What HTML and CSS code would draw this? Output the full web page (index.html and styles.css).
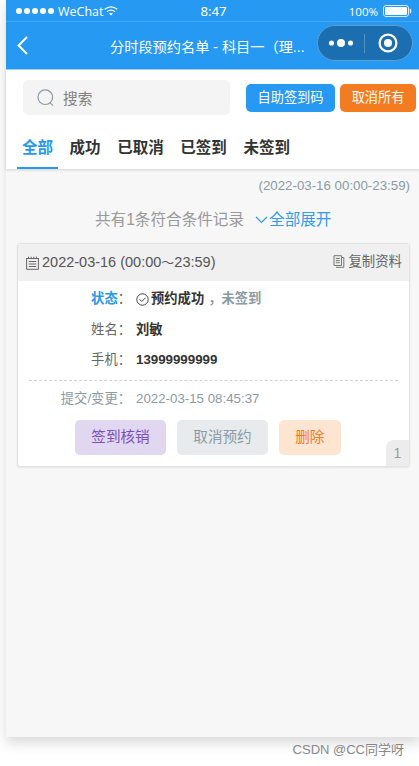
FILE: index.html
```html
<!DOCTYPE html>
<html lang="zh-CN">
<head>
  <meta charset="UTF-8">
  <meta name="viewport" content="width=device-width, initial-scale=1.0">
  <title>分时段预约名单</title>
  <link rel="stylesheet" href="styles.css">
</head>
<body>
  <div class="phone">
    <!-- Status bar -->
    <div class="status-bar">
      <div class="carrier">
        <span class="signal"><i></i><i></i><i></i><i></i><i></i></span>
        <span>WeChat</span>
        <svg class="wifi" viewBox="0 0 14 10" fill="none" stroke="#fff" stroke-width="1.3">
          <path d="M0.7 3.2Q7 -1.6 13.3 3.2M3 5.7Q7 2.7 11 5.7"/>
          <path d="M5 7.6Q7 6.2 9 7.6L7 9.6Z" fill="#fff" stroke="none"/>
        </svg>
      </div>
      <span class="clock">8:47</span>
      <div class="power">
        <span>100%</span>
        <svg class="battery" viewBox="0 0 30 12">
          <rect x="0.5" y="0.5" width="25" height="11" rx="2.5" fill="none" stroke="#fff" stroke-opacity=".8"/>
          <rect x="2" y="2" width="22" height="8" rx="1" fill="#fff"/>
          <path d="M27.2 3.8Q29 6 27.2 8.2Z" fill="#fff" stroke="#fff" stroke-width=".6"/>
        </svg>
      </div>
    </div>

    <!-- Nav bar -->
    <div class="nav-bar">
      <svg class="back" viewBox="0 0 11 19" fill="none" stroke="#fff" stroke-width="2">
        <path d="M10 1L1.6 9.5L10 18"/>
      </svg>
      <h1 class="title">分时段预约名单 - 科目一（理...</h1>
      <div class="capsule">
        <svg class="dots" viewBox="0 0 26 8" fill="#fff">
          <circle cx="3.5" cy="4" r="2.6"/>
          <circle cx="13" cy="4" r="4"/>
          <circle cx="22.5" cy="4" r="2.6"/>
        </svg>
        <span class="split"></span>
        <svg class="target" viewBox="0 0 20 20">
          <circle cx="10" cy="10" r="8.4" fill="none" stroke="#fff" stroke-width="2.3"/>
          <circle cx="10" cy="10" r="4" fill="#fff"/>
        </svg>
      </div>
    </div>

    <!-- Search and tabs -->
    <div class="toolbar">
      <div class="search-row">
        <div class="search">
          <svg class="search-icon" viewBox="0 0 18 18" fill="none" stroke="#8a9ba5" stroke-width="1.2">
            <circle cx="8.3" cy="8.2" r="7.3"/>
            <path d="M13 13.8L16 16.6"/>
          </svg>
          <span>搜索</span>
        </div>
        <div class="btn-small blue">自助签到码</div>
        <div class="btn-small orange">取消所有</div>
      </div>
      <div class="tabs">
        <div class="tab active">全部</div>
        <div class="tab">成功</div>
        <div class="tab">已取消</div>
        <div class="tab">已签到</div>
        <div class="tab">未签到</div>
      </div>
    </div>

    <div class="range">(2022-03-16 00:00-23:59)</div>
    <div class="summary">
      <span>共有1条符合条件记录</span>
      <span class="expand">
        <svg class="chevron" viewBox="0 0 13 8" fill="none" stroke="#2f9bf3" stroke-width="1.2">
          <path d="M1 1L6.5 6.5L12 1"/>
        </svg>全部展开</span>
    </div>

    <!-- Record -->
    <div class="card">
      <div class="card-head">
        <div class="slot">
          <svg class="calendar" viewBox="0 0 13 14" fill="none" stroke="#666" stroke-width="1">
            <path d="M0.6 2V13.3H12.4V2M0.6 2.5H12.4M2.5 0.7V2M5.2 0.7V2M7.8 0.7V2M10.5 0.7V2M2.8 5.5H10.2M2.8 8H10.2M2.8 10.5H10.2"/>
          </svg>
          <span>2022-03-16 (00:00<span class="tilde">～</span>23:59)</span>
        </div>
        <div class="copy">
          <svg class="copy-icon" viewBox="0 0 12 13" fill="none" stroke="#777" stroke-width="1">
            <path d="M1 0.7H8.5V10.5H1ZM3 12.3H10.8V2.5H8.5M2.8 3.5H6.8M2.8 5.6H6.8M2.8 7.7H6.8"/>
          </svg>
          <span>复制资料</span>
        </div>
      </div>
      <div class="fields">
        <div class="field">
          <span class="label"><b class="state">状态</b>：</span>
          <span class="value">
            <svg class="check" viewBox="0 0 13 13" fill="none" stroke="#444" stroke-width="1">
              <circle cx="6.5" cy="6.5" r="5.7"/>
              <path d="M3.7 6.4L5.8 8.5L9.5 4.8"/>
            </svg>
            <span>预约成功</span><span class="pending">，未签到</span>
          </span>
        </div>
        <div class="field">
          <span class="label">姓名：</span>
          <span class="value">刘敏</span>
        </div>
        <div class="field">
          <span class="label">手机：</span>
          <span class="value">13999999999</span>
        </div>
      </div>
      <div class="field changed">
        <span class="label">提交/变更：</span>
        <span class="value">2022-03-15 08:45:37</span>
      </div>
      <div class="actions">
        <div class="btn purple">签到核销</div>
        <div class="btn gray">取消预约</div>
        <div class="btn peach">删除</div>
      </div>
      <span class="index">1</span>
    </div>
  </div>
  <div class="watermark">CSDN @CC同学呀</div>
</body>
</html>
```
FILE: styles.css
```css
* {
  box-sizing: border-box;
}

body {
  margin: 0;
  height: 766px;
  overflow: hidden;
  background: #fff;
  font-family: "Liberation Sans", "Noto Sans CJK SC", sans-serif;
  color: #444;
}

svg {
  display: block;
  flex-shrink: 0;
}

.phone {
  width: 415px;
  height: 737px;
  margin-left: 6px;
  background: #f7f7f7;
  box-shadow: 0 6px 12px rgba(0, 0, 0, 0.15);
}

/* Status bar */
.status-bar {
  display: grid;
  grid-template-columns: 1fr auto 1fr;
  align-items: center;
  height: 22px;
  padding: 1px 10px 0 10px;
  background: #2699f2;
  border-bottom: 1px solid #46a8f5;
  color: #fff;
  font-family: "Open Sans", sans-serif;
  font-size: 12.5px;
}

.carrier,
.power,
.signal {
  display: flex;
  align-items: center;
}

.signal {
  gap: 2px;
  margin-right: 4px;
}

.signal i {
  width: 6px;
  height: 6px;
  border-radius: 50%;
  background: #fff;
}

.wifi {
  width: 14px;
  height: 10px;
}

.clock {
  font-family: "Noto Sans", sans-serif;
  font-size: 13.2px;
}

.power {
  justify-content: flex-end;
  gap: 5px;
  margin-right: -2px;
  font-size: 11.5px;
}

.battery {
  width: 30px;
  height: 12px;
}

/* Nav bar */
.nav-bar {
  display: flex;
  align-items: center;
  height: 48px;
  padding-left: 11px;
  background: #2699f2;
  border-bottom: 1px solid #a5d4fa;
  color: #fff;
}

.back {
  width: 11px;
  height: 19px;
}

.title {
  width: 198px;
  margin: 0 9px 0 82px;
  white-space: nowrap;
  font-size: 14.2px;
  font-weight: 400;
}

.capsule {
  display: flex;
  align-items: center;
  width: 96px;
  height: 36px;
  margin-top: -5px;
  padding-left: 10px;
  border: 1px solid #5e9cce;
  border-radius: 18px;
  background: #1b6eb0;
}

.dots {
  width: 26px;
  height: 8px;
}

.split {
  width: 1px;
  height: 19px;
  margin: 0 13px 0 10px;
  background: #5592c2;
}

.target {
  width: 20px;
  height: 20px;
}

/* Search and tabs */
.toolbar {
  height: 99px;
  padding-top: 10px;
  background: #fff;
  box-shadow: 0 1px 3px rgba(0, 0, 0, 0.15);
}

.search-row {
  display: flex;
  align-items: center;
  padding-left: 17px;
}

.search {
  display: flex;
  align-items: center;
  gap: 8px;
  width: 207px;
  height: 35px;
  margin-right: 16px;
  padding-left: 14px;
  border-radius: 5px;
  background: #f4f4f4;
  color: #808080;
  font-size: 14.7px;
}

.search-icon {
  width: 18px;
  height: 18px;
}

.btn-small {
  height: 28px;
  border-radius: 5px;
  color: #fff;
  font-size: 13.2px;
  line-height: 28px;
  text-align: center;
}

.blue {
  width: 89px;
  margin-right: 5px;
  background: #2699f2;
}

.orange {
  width: 76px;
  background: #f47c20;
}

.tabs {
  display: flex;
  gap: 6.6px;
  padding-left: 11px;
  margin-top: 11px;
}

.tab {
  height: 43px;
  padding: 0 5px;
  border-bottom: 2px solid transparent;
  color: #333;
  font-size: 15.5px;
  font-weight: 700;
  line-height: 44px;
}

.tab.active {
  border-bottom-color: #2699f2;
  color: #2699f2;
}

.range {
  padding: 7px 11px 0 0;
  color: #8a9ba5;
  font-size: 13.3px;
  line-height: 20px;
  text-align: right;
}

.summary {
  display: flex;
  gap: 11px;
  margin-left: 89px;
  padding-top: 12px;
  color: #999;
  font-size: 15.6px;
  line-height: 24px;
}

.expand {
  display: flex;
  align-items: center;
  gap: 1px;
  color: #2f9bf3;
}

.chevron {
  width: 13px;
  height: 8px;
}

/* Record card */
.card {
  position: relative;
  width: 393px;
  height: 224px;
  margin: 11px 0 0 11px;
  border: 1px solid #e3e3e3;
  border-radius: 3px;
  background: #fff;
  box-shadow: 0 1px 2px rgba(0, 0, 0, 0.08);
}

.card-head {
  display: flex;
  align-items: center;
  justify-content: space-between;
  height: 37px;
  padding: 0 7px 0 8px;
  background: #f0f0f0;
  color: #555;
}

.slot,
.copy {
  display: flex;
  align-items: center;
  gap: 3px;
}

.slot {
  font-size: 14.5px;
  line-height: 20px;
}

.tilde {
  font-size: 13px;
}

.calendar {
  width: 13px;
  height: 14px;
}

.copy {
  color: #666;
  font-size: 13.4px;
  line-height: 18px;
  padding-bottom: 2px;
}

.copy-icon {
  width: 12px;
  height: 13px;
}

.fields {
  margin: 0 11px;
  height: 100px;
  padding-top: 3px;
  border-bottom: 1px dashed #d4d4d4;
}

.field {
  display: flex;
  height: 30.5px;
  font-size: 13.3px;
  line-height: 30px;
}

.label {
  width: 102px;
  margin-right: 5px;
  color: #666;
  text-align: right;
  white-space: nowrap;
}

.state {
  color: #2699f2;
}

.value {
  display: flex;
  align-items: center;
  color: #333;
  font-weight: 700;
}

.check {
  width: 13px;
  height: 13px;
  margin-right: 2px;
}

.pending {
  margin-left: 4px;
  color: #8a9ba5;
}

.changed {
  margin: 3px 11px 0;
}

.changed .label,
.changed .value {
  color: #8a9ba5;
  font-weight: 400;
}

.actions {
  display: flex;
  gap: 11px;
  padding: 5px 0 0 57px;
}

.btn {
  height: 35px;
  padding: 0 16.3px;
  border-radius: 5px;
  font-size: 14.6px;
  line-height: 35px;
}

.purple {
  background: #e1d7f0;
  color: #7a4fbc;
}

.gray {
  background: #e7ebee;
  color: #8a9ba5;
}

.peach {
  background: #fee5d2;
  color: #f47c20;
}

.index {
  position: absolute;
  right: 0;
  bottom: 0;
  width: 23px;
  height: 26px;
  border-radius: 8px 0 0 0;
  background: #ececec;
  color: #999;
  font-size: 14px;
  line-height: 26px;
  text-align: center;
}

.watermark {
  position: relative;
  padding: 3px 15px 0 0;
  color: #888;
  font-size: 13px;
  line-height: 20px;
  text-align: right;
}
```
